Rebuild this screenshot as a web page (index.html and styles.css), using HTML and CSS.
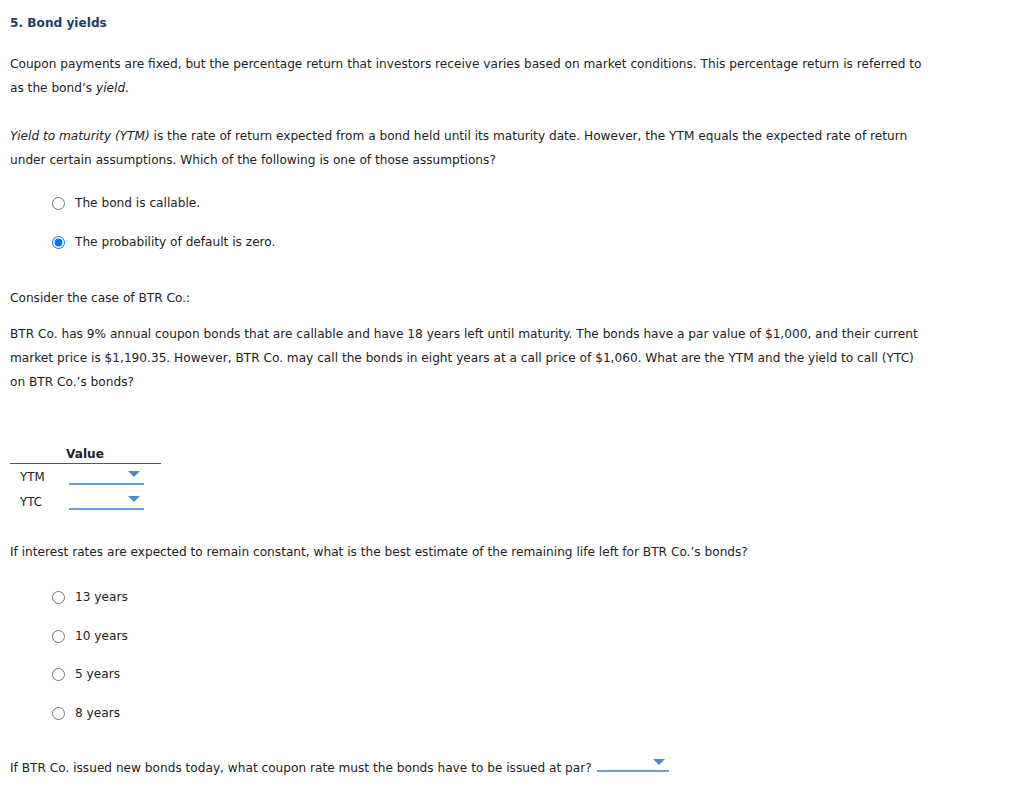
FILE: index.html
```html
<!DOCTYPE html>
<html>
<head>
<meta charset="utf-8">
<link rel="stylesheet" href="styles.css">
</head>
<body>
<div class="page">
  <h1 class="title">5. Bond yields</h1>
  <p class="para p1">Coupon payments are fixed, but the percentage return that investors receive varies based on market conditions. This percentage return is referred to as the bond’s <i>yield</i>.</p>
  <p class="para p2"><i>Yield to maturity (YTM)</i> is the rate of return expected from a bond held until its maturity date. However, the YTM equals the expected rate of return under certain assumptions. Which of the following is one of those assumptions?</p>
  <div class="options o1">
    <label class="opt"><input type="radio" name="a"> The bond is callable.</label>
    <label class="opt"><input type="radio" name="a" checked> The probability of default is zero.</label>
  </div>
  <p class="para p3">Consider the case of BTR Co.:</p>
  <p class="para p4">BTR Co. has 9% annual coupon bonds that are callable and have 18 years left until maturity. The bonds have a par value of $1,000, and their current market price is $1,190.35. However, BTR Co. may call the bonds in eight years at a call price of $1,060. What are the YTM and the yield to call (YTC) on BTR Co.’s bonds?</p>
  <table class="tbl">
    <thead><tr><th class="lab"></th><th class="val">Value</th></tr></thead>
    <tbody>
      <tr><td class="lab">YTM</td><td class="val"><span class="dd"></span></td></tr>
      <tr><td class="lab">YTC</td><td class="val"><span class="dd"></span></td></tr>
    </tbody>
  </table>
  <p class="para p5">If interest rates are expected to remain constant, what is the best estimate of the remaining life left for BTR Co.’s bonds?</p>
  <div class="options o2">
    <label class="opt"><input type="radio" name="b"> 13 years</label>
    <label class="opt"><input type="radio" name="b"> 10 years</label>
    <label class="opt"><input type="radio" name="b"> 5 years</label>
    <label class="opt"><input type="radio" name="b"> 8 years</label>
  </div>
  <p class="para p6">If BTR Co. issued new bonds today, what coupon rate must the bonds have to be issued at par? <span class="dd inline"></span></p>
</div>
</body>
</html>
```

FILE: styles.css
```css
html, body { margin: 0; padding: 0; background: #fff; }
body { font-family: "DejaVu Sans", Verdana, sans-serif; font-size: 12.15px; color: #222; }
.page { padding: 0 10px; width: 915px; }
.title { font-size: 12.15px; font-weight: bold; color: #1c3d66; margin: 0; padding-top: 15px; line-height: 16px; }
.para { margin: 0; line-height: 24px; }
.p1 { margin-top: 21px; }
.p2 { margin-top: 24px; }
.options { display: flex; flex-direction: column; padding-left: 42px; }
.o1 { margin-top: 22px; gap: 20px; }
.opt { display: flex; align-items: center; line-height: 19px; }
.opt input { margin: 0 10px 0 0; width: 13px; height: 13px; }
.p3 { margin-top: 34px; }
.p4 { margin-top: 12px; }
.tbl { border-collapse: collapse; margin-top: 52px; }
.tbl th { font-weight: bold; padding: 0 0 1px 0; border-bottom: 1px solid #555; line-height: 16px; }
.tbl th.lab { width: 55px; }
.tbl th.val { width: 95px; text-align: left; padding-left: 1px; }
.tbl td { padding: 0; height: 25px; vertical-align: middle; }
.tbl td.lab { padding-left: 10px; font-size: 11.8px; }
.tbl td.val { padding-left: 4px; }
.dd { display: inline-block; width: 75px; height: 15px; border-bottom: 2px solid #6a9fd2; position: relative; vertical-align: middle; }
.dd::after { content: ""; position: absolute; right: 4px; top: 3px; border-left: 6.5px solid transparent; border-right: 6.5px solid transparent; border-top: 6px solid #4a8ccb; }
.p5 { margin-top: 26px; }
.o2 { margin-top: 24px; gap: 19.5px; }
.p6 { margin-top: 33px; }
.dd.inline { width: 72px; vertical-align: baseline; height: 13px; margin-left: 2px; }
.dd.inline::after { top: 2px; }
```
